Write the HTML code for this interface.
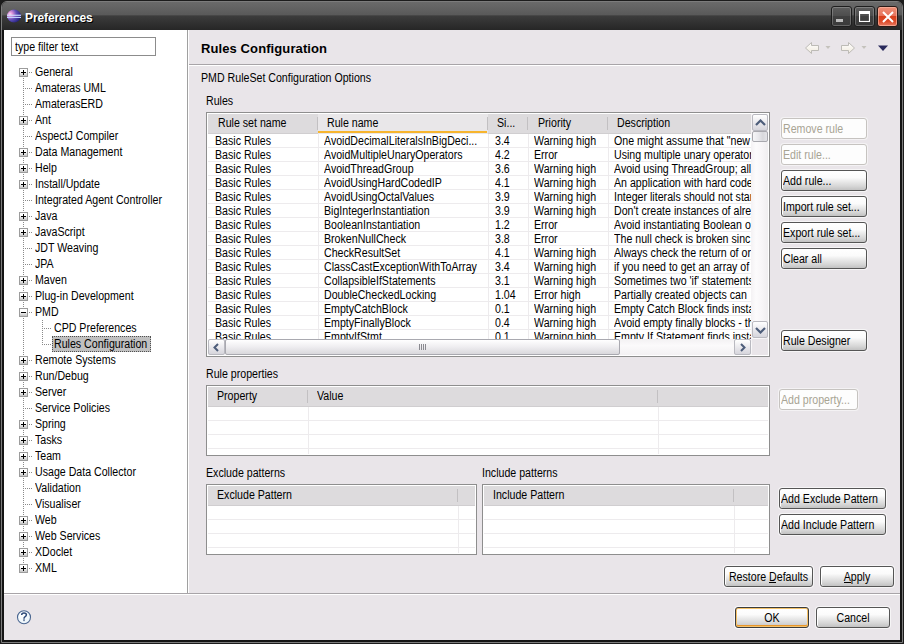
<!DOCTYPE html><html><head><meta charset="utf-8"><style>
*{margin:0;padding:0;box-sizing:border-box}
html,body{width:904px;height:644px;overflow:hidden;background:#1c1c1c;font-family:'Liberation Sans', sans-serif}
.t{position:absolute;white-space:nowrap;font-size:12px;line-height:14px;letter-spacing:0;color:#000;transform:scaleX(0.885);transform-origin:0 0}
.dis{color:#A8A494}
.btn{position:absolute;border:1px solid #555;border-radius:3px;background:linear-gradient(#ffffff 0%,#fbfbfb 35%,#eeeeee 50%,#d6d6d6 80%,#c2c2c2 100%);box-shadow:inset 1px 0 0 #fff,0 0 0 1px rgba(255,255,255,0.6)}
.dbtn{position:absolute;border:1px solid #C6C3C0;border-radius:3px;background:#fdfdfd;box-shadow:0 0 0 1px rgba(255,255,255,0.5)}
.hdr{position:absolute;background:#DDDBDD;}
.ok{border-color:#3c3c3c;box-shadow:inset 0 0 0 1px #F5C26A,inset 0 -1px 0 1px #E8962A,0 0 0 1px rgba(255,255,255,0.7)}
</style></head><body><div style="position:absolute;left:0px;top:0px;width:904px;height:644px;background:#1c1c1c"></div>
<div style="position:absolute;left:1px;top:1px;width:902px;height:642px;border:1px solid #7c7c7c;border-radius:6px 6px 0 0;background:#141414"></div>
<div style="position:absolute;left:2px;top:2px;width:900px;height:28px;border-radius:5px 5px 0 0;background:linear-gradient(#6a6a6a 0%,#5a5a5a 45%,#3c3c3c 50%,#262626 100%)"></div>
<div style="position:absolute;left:4px;top:30px;width:896px;height:610px;background:#E9E5E9"></div>
<svg style="position:absolute;left:6px;top:9px" width="16" height="15" viewBox="0 0 16 15">
<defs><radialGradient id="eg" cx="0.22" cy="0.35" r="0.9"><stop offset="0" stop-color="#ffd8f4"/><stop offset="0.2" stop-color="#d890d8"/><stop offset="0.5" stop-color="#6050b8"/><stop offset="1" stop-color="#101068"/></radialGradient></defs>
<ellipse cx="8" cy="7" rx="7" ry="6.5" fill="url(#eg)"/>
<rect x="1" y="5.7" width="14" height="1.1" fill="#d0e0ff"/>
<rect x="1" y="7.9" width="14" height="1.1" fill="#c0d0ff"/>
</svg>
<div style="position:absolute;left:25px;top:11px;font:bold 12px/14px 'Liberation Sans', sans-serif;letter-spacing:-0.1px;color:#fff;text-shadow:1px 1px 0 #000">Preferences</div>
<div style="position:absolute;left:831px;top:6px;width:21px;height:21px;border-radius:3px;border:1px solid #1e1e1e;box-shadow:inset 0 0 0 1px rgba(255,255,255,0.22);background:linear-gradient(#5e5e5e,#4e4e4e 45%,#404040 50%,#3a3a3a 100%)"><div style="position:absolute;left:4px;top:12px;width:7px;height:3px;background:#bdbdbd"></div></div>
<div style="position:absolute;left:854px;top:6px;width:21px;height:21px;border-radius:3px;border:1px solid #1e1e1e;box-shadow:inset 0 0 0 1px rgba(255,255,255,0.22);background:linear-gradient(#5e5e5e,#4e4e4e 45%,#404040 50%,#3a3a3a 100%)"><svg style="position:absolute;left:4px;top:4px" width="11" height="11" viewBox="0 0 11 11"><rect x="0.5" y="0.5" width="10" height="10" fill="none" stroke="#fff" stroke-width="1.2"/><rect x="0" y="0" width="11" height="3" fill="#fff"/></svg></div>
<div style="position:absolute;left:877px;top:6px;width:21px;height:21px;border-radius:3px;border:1px solid #2a1a16;box-shadow:inset 0 0 0 1px rgba(255,190,170,0.6);background:linear-gradient(#ee9078,#e8745c 45%,#d8401c 50%,#dc4a28 75%,#e87a62 100%)"><svg style="position:absolute;left:4px;top:4px" width="12" height="12" viewBox="0 0 12 12"><path d="M1 1 L11 11 M11 1 L1 11" stroke="#fff" stroke-width="2"/></svg></div>
<div style="position:absolute;left:4px;top:30px;width:183px;height:563px;background:#fff"></div>
<div style="position:absolute;left:187px;top:30px;width:1px;height:563px;background:#A0A0A0"></div>
<div style="position:absolute;left:188px;top:30px;width:1px;height:563px;background:#fff"></div>
<div style="position:absolute;left:11px;top:37px;width:145px;height:19px;border:1px solid #8c8c8c;background:#fff"></div>
<div class="t" style="left:15px;top:40px;">type filter text</div>
<div style="position:absolute;left:23px;top:78px;width:1px;height:495px;background-image:linear-gradient(#8a8a8a 50%,transparent 50%);background-size:1px 2px"></div>
<div style="position:absolute;left:25px;top:72px;width:7px;height:1px;background-image:linear-gradient(90deg,#8a8a8a 50%,transparent 50%);background-size:2px 1px"></div>
<div style="position:absolute;left:19px;top:68px;width:9px;height:9px;border:1px solid #9c9c9c;background:linear-gradient(#fff 35%,#c4c4c4)"><div style="position:absolute;left:1px;top:3px;width:5px;height:1px;background:#000"></div><div style="position:absolute;left:3px;top:1px;width:1px;height:5px;background:#000"></div></div>
<div class="t" style="left:35px;top:65px;">General</div>
<div style="position:absolute;left:25px;top:88px;width:7px;height:1px;background-image:linear-gradient(90deg,#8a8a8a 50%,transparent 50%);background-size:2px 1px"></div>
<div class="t" style="left:35px;top:81px;">Amateras UML</div>
<div style="position:absolute;left:25px;top:104px;width:7px;height:1px;background-image:linear-gradient(90deg,#8a8a8a 50%,transparent 50%);background-size:2px 1px"></div>
<div class="t" style="left:35px;top:97px;">AmaterasERD</div>
<div style="position:absolute;left:25px;top:120px;width:7px;height:1px;background-image:linear-gradient(90deg,#8a8a8a 50%,transparent 50%);background-size:2px 1px"></div>
<div style="position:absolute;left:19px;top:116px;width:9px;height:9px;border:1px solid #9c9c9c;background:linear-gradient(#fff 35%,#c4c4c4)"><div style="position:absolute;left:1px;top:3px;width:5px;height:1px;background:#000"></div><div style="position:absolute;left:3px;top:1px;width:1px;height:5px;background:#000"></div></div>
<div class="t" style="left:35px;top:113px;">Ant</div>
<div style="position:absolute;left:25px;top:136px;width:7px;height:1px;background-image:linear-gradient(90deg,#8a8a8a 50%,transparent 50%);background-size:2px 1px"></div>
<div class="t" style="left:35px;top:129px;">AspectJ Compiler</div>
<div style="position:absolute;left:25px;top:152px;width:7px;height:1px;background-image:linear-gradient(90deg,#8a8a8a 50%,transparent 50%);background-size:2px 1px"></div>
<div style="position:absolute;left:19px;top:148px;width:9px;height:9px;border:1px solid #9c9c9c;background:linear-gradient(#fff 35%,#c4c4c4)"><div style="position:absolute;left:1px;top:3px;width:5px;height:1px;background:#000"></div><div style="position:absolute;left:3px;top:1px;width:1px;height:5px;background:#000"></div></div>
<div class="t" style="left:35px;top:145px;">Data Management</div>
<div style="position:absolute;left:25px;top:168px;width:7px;height:1px;background-image:linear-gradient(90deg,#8a8a8a 50%,transparent 50%);background-size:2px 1px"></div>
<div style="position:absolute;left:19px;top:164px;width:9px;height:9px;border:1px solid #9c9c9c;background:linear-gradient(#fff 35%,#c4c4c4)"><div style="position:absolute;left:1px;top:3px;width:5px;height:1px;background:#000"></div><div style="position:absolute;left:3px;top:1px;width:1px;height:5px;background:#000"></div></div>
<div class="t" style="left:35px;top:161px;">Help</div>
<div style="position:absolute;left:25px;top:184px;width:7px;height:1px;background-image:linear-gradient(90deg,#8a8a8a 50%,transparent 50%);background-size:2px 1px"></div>
<div style="position:absolute;left:19px;top:180px;width:9px;height:9px;border:1px solid #9c9c9c;background:linear-gradient(#fff 35%,#c4c4c4)"><div style="position:absolute;left:1px;top:3px;width:5px;height:1px;background:#000"></div><div style="position:absolute;left:3px;top:1px;width:1px;height:5px;background:#000"></div></div>
<div class="t" style="left:35px;top:177px;">Install/Update</div>
<div style="position:absolute;left:25px;top:200px;width:7px;height:1px;background-image:linear-gradient(90deg,#8a8a8a 50%,transparent 50%);background-size:2px 1px"></div>
<div class="t" style="left:35px;top:193px;">Integrated Agent Controller</div>
<div style="position:absolute;left:25px;top:216px;width:7px;height:1px;background-image:linear-gradient(90deg,#8a8a8a 50%,transparent 50%);background-size:2px 1px"></div>
<div style="position:absolute;left:19px;top:212px;width:9px;height:9px;border:1px solid #9c9c9c;background:linear-gradient(#fff 35%,#c4c4c4)"><div style="position:absolute;left:1px;top:3px;width:5px;height:1px;background:#000"></div><div style="position:absolute;left:3px;top:1px;width:1px;height:5px;background:#000"></div></div>
<div class="t" style="left:35px;top:209px;">Java</div>
<div style="position:absolute;left:25px;top:232px;width:7px;height:1px;background-image:linear-gradient(90deg,#8a8a8a 50%,transparent 50%);background-size:2px 1px"></div>
<div style="position:absolute;left:19px;top:228px;width:9px;height:9px;border:1px solid #9c9c9c;background:linear-gradient(#fff 35%,#c4c4c4)"><div style="position:absolute;left:1px;top:3px;width:5px;height:1px;background:#000"></div><div style="position:absolute;left:3px;top:1px;width:1px;height:5px;background:#000"></div></div>
<div class="t" style="left:35px;top:225px;">JavaScript</div>
<div style="position:absolute;left:25px;top:248px;width:7px;height:1px;background-image:linear-gradient(90deg,#8a8a8a 50%,transparent 50%);background-size:2px 1px"></div>
<div class="t" style="left:35px;top:241px;">JDT Weaving</div>
<div style="position:absolute;left:25px;top:264px;width:7px;height:1px;background-image:linear-gradient(90deg,#8a8a8a 50%,transparent 50%);background-size:2px 1px"></div>
<div class="t" style="left:35px;top:257px;">JPA</div>
<div style="position:absolute;left:25px;top:280px;width:7px;height:1px;background-image:linear-gradient(90deg,#8a8a8a 50%,transparent 50%);background-size:2px 1px"></div>
<div style="position:absolute;left:19px;top:276px;width:9px;height:9px;border:1px solid #9c9c9c;background:linear-gradient(#fff 35%,#c4c4c4)"><div style="position:absolute;left:1px;top:3px;width:5px;height:1px;background:#000"></div><div style="position:absolute;left:3px;top:1px;width:1px;height:5px;background:#000"></div></div>
<div class="t" style="left:35px;top:273px;">Maven</div>
<div style="position:absolute;left:25px;top:296px;width:7px;height:1px;background-image:linear-gradient(90deg,#8a8a8a 50%,transparent 50%);background-size:2px 1px"></div>
<div style="position:absolute;left:19px;top:292px;width:9px;height:9px;border:1px solid #9c9c9c;background:linear-gradient(#fff 35%,#c4c4c4)"><div style="position:absolute;left:1px;top:3px;width:5px;height:1px;background:#000"></div><div style="position:absolute;left:3px;top:1px;width:1px;height:5px;background:#000"></div></div>
<div class="t" style="left:35px;top:289px;">Plug-in Development</div>
<div style="position:absolute;left:25px;top:312px;width:7px;height:1px;background-image:linear-gradient(90deg,#8a8a8a 50%,transparent 50%);background-size:2px 1px"></div>
<div style="position:absolute;left:19px;top:308px;width:9px;height:9px;border:1px solid #9c9c9c;background:linear-gradient(#fff 35%,#c4c4c4)"><div style="position:absolute;left:1px;top:3px;width:5px;height:1px;background:#000"></div></div>
<div class="t" style="left:35px;top:305px;">PMD</div>
<div style="position:absolute;left:44px;top:328px;width:7px;height:1px;background-image:linear-gradient(90deg,#8a8a8a 50%,transparent 50%);background-size:2px 1px"></div>
<div class="t" style="left:54px;top:321px;">CPD Preferences</div>
<div style="position:absolute;left:44px;top:344px;width:7px;height:1px;background-image:linear-gradient(90deg,#8a8a8a 50%,transparent 50%);background-size:2px 1px"></div>
<div style="position:absolute;left:52px;top:336px;width:99px;height:16px;background:#C0C0C0;border:1px dotted #505050"></div>
<div class="t" style="left:54px;top:337px;">Rules Configuration</div>
<div style="position:absolute;left:25px;top:360px;width:7px;height:1px;background-image:linear-gradient(90deg,#8a8a8a 50%,transparent 50%);background-size:2px 1px"></div>
<div style="position:absolute;left:19px;top:356px;width:9px;height:9px;border:1px solid #9c9c9c;background:linear-gradient(#fff 35%,#c4c4c4)"><div style="position:absolute;left:1px;top:3px;width:5px;height:1px;background:#000"></div><div style="position:absolute;left:3px;top:1px;width:1px;height:5px;background:#000"></div></div>
<div class="t" style="left:35px;top:353px;">Remote Systems</div>
<div style="position:absolute;left:25px;top:376px;width:7px;height:1px;background-image:linear-gradient(90deg,#8a8a8a 50%,transparent 50%);background-size:2px 1px"></div>
<div style="position:absolute;left:19px;top:372px;width:9px;height:9px;border:1px solid #9c9c9c;background:linear-gradient(#fff 35%,#c4c4c4)"><div style="position:absolute;left:1px;top:3px;width:5px;height:1px;background:#000"></div><div style="position:absolute;left:3px;top:1px;width:1px;height:5px;background:#000"></div></div>
<div class="t" style="left:35px;top:369px;">Run/Debug</div>
<div style="position:absolute;left:25px;top:392px;width:7px;height:1px;background-image:linear-gradient(90deg,#8a8a8a 50%,transparent 50%);background-size:2px 1px"></div>
<div style="position:absolute;left:19px;top:388px;width:9px;height:9px;border:1px solid #9c9c9c;background:linear-gradient(#fff 35%,#c4c4c4)"><div style="position:absolute;left:1px;top:3px;width:5px;height:1px;background:#000"></div><div style="position:absolute;left:3px;top:1px;width:1px;height:5px;background:#000"></div></div>
<div class="t" style="left:35px;top:385px;">Server</div>
<div style="position:absolute;left:25px;top:408px;width:7px;height:1px;background-image:linear-gradient(90deg,#8a8a8a 50%,transparent 50%);background-size:2px 1px"></div>
<div class="t" style="left:35px;top:401px;">Service Policies</div>
<div style="position:absolute;left:25px;top:424px;width:7px;height:1px;background-image:linear-gradient(90deg,#8a8a8a 50%,transparent 50%);background-size:2px 1px"></div>
<div style="position:absolute;left:19px;top:420px;width:9px;height:9px;border:1px solid #9c9c9c;background:linear-gradient(#fff 35%,#c4c4c4)"><div style="position:absolute;left:1px;top:3px;width:5px;height:1px;background:#000"></div><div style="position:absolute;left:3px;top:1px;width:1px;height:5px;background:#000"></div></div>
<div class="t" style="left:35px;top:417px;">Spring</div>
<div style="position:absolute;left:25px;top:440px;width:7px;height:1px;background-image:linear-gradient(90deg,#8a8a8a 50%,transparent 50%);background-size:2px 1px"></div>
<div style="position:absolute;left:19px;top:436px;width:9px;height:9px;border:1px solid #9c9c9c;background:linear-gradient(#fff 35%,#c4c4c4)"><div style="position:absolute;left:1px;top:3px;width:5px;height:1px;background:#000"></div><div style="position:absolute;left:3px;top:1px;width:1px;height:5px;background:#000"></div></div>
<div class="t" style="left:35px;top:433px;">Tasks</div>
<div style="position:absolute;left:25px;top:456px;width:7px;height:1px;background-image:linear-gradient(90deg,#8a8a8a 50%,transparent 50%);background-size:2px 1px"></div>
<div style="position:absolute;left:19px;top:452px;width:9px;height:9px;border:1px solid #9c9c9c;background:linear-gradient(#fff 35%,#c4c4c4)"><div style="position:absolute;left:1px;top:3px;width:5px;height:1px;background:#000"></div><div style="position:absolute;left:3px;top:1px;width:1px;height:5px;background:#000"></div></div>
<div class="t" style="left:35px;top:449px;">Team</div>
<div style="position:absolute;left:25px;top:472px;width:7px;height:1px;background-image:linear-gradient(90deg,#8a8a8a 50%,transparent 50%);background-size:2px 1px"></div>
<div style="position:absolute;left:19px;top:468px;width:9px;height:9px;border:1px solid #9c9c9c;background:linear-gradient(#fff 35%,#c4c4c4)"><div style="position:absolute;left:1px;top:3px;width:5px;height:1px;background:#000"></div><div style="position:absolute;left:3px;top:1px;width:1px;height:5px;background:#000"></div></div>
<div class="t" style="left:35px;top:465px;">Usage Data Collector</div>
<div style="position:absolute;left:25px;top:488px;width:7px;height:1px;background-image:linear-gradient(90deg,#8a8a8a 50%,transparent 50%);background-size:2px 1px"></div>
<div class="t" style="left:35px;top:481px;">Validation</div>
<div style="position:absolute;left:25px;top:504px;width:7px;height:1px;background-image:linear-gradient(90deg,#8a8a8a 50%,transparent 50%);background-size:2px 1px"></div>
<div class="t" style="left:35px;top:497px;">Visualiser</div>
<div style="position:absolute;left:25px;top:520px;width:7px;height:1px;background-image:linear-gradient(90deg,#8a8a8a 50%,transparent 50%);background-size:2px 1px"></div>
<div style="position:absolute;left:19px;top:516px;width:9px;height:9px;border:1px solid #9c9c9c;background:linear-gradient(#fff 35%,#c4c4c4)"><div style="position:absolute;left:1px;top:3px;width:5px;height:1px;background:#000"></div><div style="position:absolute;left:3px;top:1px;width:1px;height:5px;background:#000"></div></div>
<div class="t" style="left:35px;top:513px;">Web</div>
<div style="position:absolute;left:25px;top:536px;width:7px;height:1px;background-image:linear-gradient(90deg,#8a8a8a 50%,transparent 50%);background-size:2px 1px"></div>
<div style="position:absolute;left:19px;top:532px;width:9px;height:9px;border:1px solid #9c9c9c;background:linear-gradient(#fff 35%,#c4c4c4)"><div style="position:absolute;left:1px;top:3px;width:5px;height:1px;background:#000"></div><div style="position:absolute;left:3px;top:1px;width:1px;height:5px;background:#000"></div></div>
<div class="t" style="left:35px;top:529px;">Web Services</div>
<div style="position:absolute;left:25px;top:552px;width:7px;height:1px;background-image:linear-gradient(90deg,#8a8a8a 50%,transparent 50%);background-size:2px 1px"></div>
<div style="position:absolute;left:19px;top:548px;width:9px;height:9px;border:1px solid #9c9c9c;background:linear-gradient(#fff 35%,#c4c4c4)"><div style="position:absolute;left:1px;top:3px;width:5px;height:1px;background:#000"></div><div style="position:absolute;left:3px;top:1px;width:1px;height:5px;background:#000"></div></div>
<div class="t" style="left:35px;top:545px;">XDoclet</div>
<div style="position:absolute;left:25px;top:568px;width:7px;height:1px;background-image:linear-gradient(90deg,#8a8a8a 50%,transparent 50%);background-size:2px 1px"></div>
<div style="position:absolute;left:19px;top:564px;width:9px;height:9px;border:1px solid #9c9c9c;background:linear-gradient(#fff 35%,#c4c4c4)"><div style="position:absolute;left:1px;top:3px;width:5px;height:1px;background:#000"></div><div style="position:absolute;left:3px;top:1px;width:1px;height:5px;background:#000"></div></div>
<div class="t" style="left:35px;top:561px;">XML</div>
<div style="position:absolute;left:42px;top:320px;width:1px;height:25px;background-image:linear-gradient(#8a8a8a 50%,transparent 50%);background-size:1px 2px"></div>
<div class="t" style="left:201px;top:42px;font-size:13px;font-weight:bold;letter-spacing:0.1px;transform:none">Rules Configuration</div>
<div style="position:absolute;left:189px;top:64px;width:711px;height:1px;background:#A8A4A8"></div>
<div style="position:absolute;left:189px;top:65px;width:711px;height:1px;background:#fff"></div>
<div style="position:absolute;left:4px;top:593px;width:896px;height:1px;background:#A8A4A8"></div>
<div style="position:absolute;left:4px;top:594px;width:896px;height:1px;background:#fff"></div>
<svg style="position:absolute;left:804px;top:42px" width="86" height="15" viewBox="0 0 86 15">
<defs><linearGradient id="ag" x1="0" y1="0" x2="0" y2="1"><stop offset="0" stop-color="#ffffff"/><stop offset="1" stop-color="#efe9dc"/></linearGradient></defs>
<path d="M1.5 6 L7.5 0.5 L7.5 3.5 L14.5 3.5 L14.5 8.5 L7.5 8.5 L7.5 11.5 Z" fill="url(#ag)" stroke="#BDBBB6" stroke-width="1"/>
<path d="M21.5 4 L26.5 4 L24 7 Z" fill="#c4c2bc"/>
<path d="M50.5 6 L44.5 0.5 L44.5 3.5 L37.5 3.5 L37.5 8.5 L44.5 8.5 L44.5 11.5 Z" fill="url(#ag)" stroke="#BDBBB6" stroke-width="1"/>
<path d="M57.5 4 L62.5 4 L60 7 Z" fill="#c4c2bc"/>
<path d="M74 3.5 L84 3.5 L79 9 Z" fill="#2a2a5c"/>
</svg>
<div class="t" style="left:201px;top:71px;">PMD RuleSet Configuration Options</div>
<div class="t" style="left:206px;top:94px;">Rules</div>
<div style="position:absolute;left:206px;top:112px;width:564px;height:245px;border:1px solid #8E8E8E;background:#fff"></div>
<div style="position:absolute;left:207px;top:113px;width:562px;height:243px;border:1px solid #fff;background:#fff"></div>
<div style="position:absolute;left:208px;top:114px;width:543px;height:20px;background:#DDDBDD"></div>
<div style="position:absolute;left:318px;top:114px;width:170px;height:20px;background:#E9E7E9"></div>
<div style="position:absolute;left:318px;top:131px;width:169px;height:2px;background:#F7B52E"></div>
<div style="position:absolute;left:208px;top:133px;width:110px;height:1px;background:#D0CED0"></div>
<div style="position:absolute;left:488px;top:133px;width:263px;height:1px;background:#D0CED0"></div>
<div style="position:absolute;left:317px;top:117px;width:1px;height:13px;background:#C2C0C2"></div>
<div style="position:absolute;left:487px;top:117px;width:1px;height:13px;background:#C2C0C2"></div>
<div style="position:absolute;left:527px;top:117px;width:1px;height:13px;background:#C2C0C2"></div>
<div style="position:absolute;left:607px;top:117px;width:1px;height:13px;background:#C2C0C2"></div>
<div class="t" style="left:218px;top:116px;">Rule set name</div>
<div class="t" style="left:327px;top:116px;">Rule name</div>
<div class="t" style="left:497px;top:116px;">Si...</div>
<div class="t" style="left:538px;top:116px;">Priority</div>
<div class="t" style="left:617px;top:116px;">Description</div>
<div style="position:absolute;left:208px;top:134px;width:543px;height:205px;overflow:hidden">
<div style="position:absolute;left:0;top:13px;width:544px;height:1px;background:#EDEBED"></div>
<div style="position:absolute;left:0;top:27px;width:544px;height:1px;background:#EDEBED"></div>
<div style="position:absolute;left:0;top:41px;width:544px;height:1px;background:#EDEBED"></div>
<div style="position:absolute;left:0;top:55px;width:544px;height:1px;background:#EDEBED"></div>
<div style="position:absolute;left:0;top:69px;width:544px;height:1px;background:#EDEBED"></div>
<div style="position:absolute;left:0;top:83px;width:544px;height:1px;background:#EDEBED"></div>
<div style="position:absolute;left:0;top:97px;width:544px;height:1px;background:#EDEBED"></div>
<div style="position:absolute;left:0;top:111px;width:544px;height:1px;background:#EDEBED"></div>
<div style="position:absolute;left:0;top:125px;width:544px;height:1px;background:#EDEBED"></div>
<div style="position:absolute;left:0;top:139px;width:544px;height:1px;background:#EDEBED"></div>
<div style="position:absolute;left:0;top:153px;width:544px;height:1px;background:#EDEBED"></div>
<div style="position:absolute;left:0;top:167px;width:544px;height:1px;background:#EDEBED"></div>
<div style="position:absolute;left:0;top:181px;width:544px;height:1px;background:#EDEBED"></div>
<div style="position:absolute;left:0;top:195px;width:544px;height:1px;background:#EDEBED"></div>
<div style="position:absolute;left:0;top:209px;width:544px;height:1px;background:#EDEBED"></div>
<div style="position:absolute;left:110px;top:0;width:1px;height:205px;background:#EDEBED"></div>
<div style="position:absolute;left:280px;top:0;width:1px;height:205px;background:#EDEBED"></div>
<div style="position:absolute;left:320px;top:0;width:1px;height:205px;background:#EDEBED"></div>
<div style="position:absolute;left:400px;top:0;width:1px;height:205px;background:#EDEBED"></div>
<div class="t" style="left:7px;top:0px;width:112.99px;overflow:hidden">Basic Rules</div>
<div class="t" style="left:116px;top:0px;width:183.05px;overflow:hidden">AvoidDecimalLiteralsInBigDeci...</div>
<div class="t" style="left:287px;top:0px;width:36.16px;overflow:hidden">3.4</div>
<div class="t" style="left:326px;top:0px;width:81.36px;overflow:hidden">Warning high</div>
<div class="t" style="left:406px;top:0px;width:154.80px;overflow:hidden">One might assume that "new</div>
<div class="t" style="left:7px;top:14px;width:112.99px;overflow:hidden">Basic Rules</div>
<div class="t" style="left:116px;top:14px;width:183.05px;overflow:hidden">AvoidMultipleUnaryOperators</div>
<div class="t" style="left:287px;top:14px;width:36.16px;overflow:hidden">4.2</div>
<div class="t" style="left:326px;top:14px;width:81.36px;overflow:hidden">Error</div>
<div class="t" style="left:406px;top:14px;width:154.80px;overflow:hidden">Using multiple unary operator</div>
<div class="t" style="left:7px;top:28px;width:112.99px;overflow:hidden">Basic Rules</div>
<div class="t" style="left:116px;top:28px;width:183.05px;overflow:hidden">AvoidThreadGroup</div>
<div class="t" style="left:287px;top:28px;width:36.16px;overflow:hidden">3.6</div>
<div class="t" style="left:326px;top:28px;width:81.36px;overflow:hidden">Warning high</div>
<div class="t" style="left:406px;top:28px;width:154.80px;overflow:hidden">Avoid using ThreadGroup; all</div>
<div class="t" style="left:7px;top:42px;width:112.99px;overflow:hidden">Basic Rules</div>
<div class="t" style="left:116px;top:42px;width:183.05px;overflow:hidden">AvoidUsingHardCodedIP</div>
<div class="t" style="left:287px;top:42px;width:36.16px;overflow:hidden">4.1</div>
<div class="t" style="left:326px;top:42px;width:81.36px;overflow:hidden">Warning high</div>
<div class="t" style="left:406px;top:42px;width:154.80px;overflow:hidden">An application with hard code</div>
<div class="t" style="left:7px;top:56px;width:112.99px;overflow:hidden">Basic Rules</div>
<div class="t" style="left:116px;top:56px;width:183.05px;overflow:hidden">AvoidUsingOctalValues</div>
<div class="t" style="left:287px;top:56px;width:36.16px;overflow:hidden">3.9</div>
<div class="t" style="left:326px;top:56px;width:81.36px;overflow:hidden">Warning high</div>
<div class="t" style="left:406px;top:56px;width:154.80px;overflow:hidden">Integer literals should not star</div>
<div class="t" style="left:7px;top:70px;width:112.99px;overflow:hidden">Basic Rules</div>
<div class="t" style="left:116px;top:70px;width:183.05px;overflow:hidden">BigIntegerInstantiation</div>
<div class="t" style="left:287px;top:70px;width:36.16px;overflow:hidden">3.9</div>
<div class="t" style="left:326px;top:70px;width:81.36px;overflow:hidden">Warning high</div>
<div class="t" style="left:406px;top:70px;width:154.80px;overflow:hidden">Don't create instances of alre</div>
<div class="t" style="left:7px;top:84px;width:112.99px;overflow:hidden">Basic Rules</div>
<div class="t" style="left:116px;top:84px;width:183.05px;overflow:hidden">BooleanInstantiation</div>
<div class="t" style="left:287px;top:84px;width:36.16px;overflow:hidden">1.2</div>
<div class="t" style="left:326px;top:84px;width:81.36px;overflow:hidden">Error</div>
<div class="t" style="left:406px;top:84px;width:154.80px;overflow:hidden">Avoid instantiating Boolean o</div>
<div class="t" style="left:7px;top:98px;width:112.99px;overflow:hidden">Basic Rules</div>
<div class="t" style="left:116px;top:98px;width:183.05px;overflow:hidden">BrokenNullCheck</div>
<div class="t" style="left:287px;top:98px;width:36.16px;overflow:hidden">3.8</div>
<div class="t" style="left:326px;top:98px;width:81.36px;overflow:hidden">Error</div>
<div class="t" style="left:406px;top:98px;width:154.80px;overflow:hidden">The null check is broken sinc</div>
<div class="t" style="left:7px;top:112px;width:112.99px;overflow:hidden">Basic Rules</div>
<div class="t" style="left:116px;top:112px;width:183.05px;overflow:hidden">CheckResultSet</div>
<div class="t" style="left:287px;top:112px;width:36.16px;overflow:hidden">4.1</div>
<div class="t" style="left:326px;top:112px;width:81.36px;overflow:hidden">Warning high</div>
<div class="t" style="left:406px;top:112px;width:154.80px;overflow:hidden">Always check the return of or</div>
<div class="t" style="left:7px;top:126px;width:112.99px;overflow:hidden">Basic Rules</div>
<div class="t" style="left:116px;top:126px;width:183.05px;overflow:hidden">ClassCastExceptionWithToArray</div>
<div class="t" style="left:287px;top:126px;width:36.16px;overflow:hidden">3.4</div>
<div class="t" style="left:326px;top:126px;width:81.36px;overflow:hidden">Warning high</div>
<div class="t" style="left:406px;top:126px;width:154.80px;overflow:hidden">if you need to get an array of</div>
<div class="t" style="left:7px;top:140px;width:112.99px;overflow:hidden">Basic Rules</div>
<div class="t" style="left:116px;top:140px;width:183.05px;overflow:hidden">CollapsibleIfStatements</div>
<div class="t" style="left:287px;top:140px;width:36.16px;overflow:hidden">3.1</div>
<div class="t" style="left:326px;top:140px;width:81.36px;overflow:hidden">Warning high</div>
<div class="t" style="left:406px;top:140px;width:154.80px;overflow:hidden">Sometimes two 'if' statements</div>
<div class="t" style="left:7px;top:154px;width:112.99px;overflow:hidden">Basic Rules</div>
<div class="t" style="left:116px;top:154px;width:183.05px;overflow:hidden">DoubleCheckedLocking</div>
<div class="t" style="left:287px;top:154px;width:36.16px;overflow:hidden">1.04</div>
<div class="t" style="left:326px;top:154px;width:81.36px;overflow:hidden">Error high</div>
<div class="t" style="left:406px;top:154px;width:154.80px;overflow:hidden">Partially created objects can</div>
<div class="t" style="left:7px;top:168px;width:112.99px;overflow:hidden">Basic Rules</div>
<div class="t" style="left:116px;top:168px;width:183.05px;overflow:hidden">EmptyCatchBlock</div>
<div class="t" style="left:287px;top:168px;width:36.16px;overflow:hidden">0.1</div>
<div class="t" style="left:326px;top:168px;width:81.36px;overflow:hidden">Warning high</div>
<div class="t" style="left:406px;top:168px;width:154.80px;overflow:hidden">Empty Catch Block finds insta</div>
<div class="t" style="left:7px;top:182px;width:112.99px;overflow:hidden">Basic Rules</div>
<div class="t" style="left:116px;top:182px;width:183.05px;overflow:hidden">EmptyFinallyBlock</div>
<div class="t" style="left:287px;top:182px;width:36.16px;overflow:hidden">0.4</div>
<div class="t" style="left:326px;top:182px;width:81.36px;overflow:hidden">Warning high</div>
<div class="t" style="left:406px;top:182px;width:154.80px;overflow:hidden">Avoid empty finally blocks - th</div>
<div class="t" style="left:7px;top:196px;width:112.99px;overflow:hidden">Basic Rules</div>
<div class="t" style="left:116px;top:196px;width:183.05px;overflow:hidden">EmptyIfStmt</div>
<div class="t" style="left:287px;top:196px;width:36.16px;overflow:hidden">0.1</div>
<div class="t" style="left:326px;top:196px;width:81.36px;overflow:hidden">Warning high</div>
<div class="t" style="left:406px;top:196px;width:154.80px;overflow:hidden">Empty If Statement finds insta</div>
</div>
<div style="position:absolute;left:751px;top:114px;width:17px;height:225px;background:linear-gradient(90deg,#F4F2F4,#FCFBFC 30%,#F8F6F8 60%,#F0EEF0)"></div>
<div style="position:absolute;left:752px;top:114px;width:16px;height:17px;border:1px solid #B9B9C0;border-radius:2px;background:linear-gradient(#FFFFFF,#E6E5EA 60%,#D6D5DC)"><svg style="position:absolute;left:2px;top:4px" width="11" height="7" viewBox="0 0 11 7"><path d="M1 6 L5.5 1.5 L10 6" fill="none" stroke="#4D5D7A" stroke-width="2.2"/></svg></div>
<div style="position:absolute;left:752px;top:131px;width:16px;height:11px;border:1px solid #A8A8AE;border-radius:2px;background:linear-gradient(90deg,#F6F6F8,#E8E8EC 40%,#D8D8DC 70%,#E4E4E8)"></div>
<div style="position:absolute;left:752px;top:321px;width:16px;height:17px;border:1px solid #B9B9C0;border-radius:2px;background:linear-gradient(#FFFFFF,#E6E5EA 60%,#D6D5DC)"><svg style="position:absolute;left:2px;top:5px" width="11" height="7" viewBox="0 0 11 7"><path d="M1 1 L5.5 5.5 L10 1" fill="none" stroke="#4D5D7A" stroke-width="2.2"/></svg></div>
<div style="position:absolute;left:208px;top:339px;width:544px;height:16px;background:linear-gradient(#F3F1F3,#FBFAFB 40%,#F3F1F3)"></div>
<div style="position:absolute;left:208px;top:339px;width:17px;height:16px;border:1px solid #B9B9C0;border-radius:2px;background:linear-gradient(#FFFFFF,#E6E5EA 60%,#D6D5DC)"><svg style="position:absolute;left:4px;top:3px" width="6" height="9" viewBox="0 0 6 9"><path d="M5 1 L1.5 4.5 L5 8" fill="none" stroke="#4D5D7A" stroke-width="2"/></svg></div>
<div style="position:absolute;left:225px;top:339px;width:395px;height:16px;border:1px solid #A9A9B0;border-radius:2px;background:linear-gradient(#FFFFFF,#EEEDF0 50%,#D9D8DC)"><div style="position:absolute;left:193px;top:4px;width:1px;height:6px;background:#8a8a90"></div><div style="position:absolute;left:195px;top:4px;width:1px;height:6px;background:#8a8a90"></div><div style="position:absolute;left:197px;top:4px;width:1px;height:6px;background:#8a8a90"></div><div style="position:absolute;left:199px;top:4px;width:1px;height:6px;background:#8a8a90"></div></div>
<div style="position:absolute;left:734px;top:339px;width:17px;height:16px;border:1px solid #B9B9C0;border-radius:2px;background:linear-gradient(#FFFFFF,#E6E5EA 60%,#D6D5DC)"><svg style="position:absolute;left:5px;top:3px" width="6" height="9" viewBox="0 0 6 9"><path d="M1 1 L4.5 4.5 L1 8" fill="none" stroke="#4D5D7A" stroke-width="2"/></svg></div>
<div style="position:absolute;left:752px;top:339px;width:16px;height:16px;background:#E9E5E9"></div>
<div class="dbtn" style="left:781px;top:118px;width:86px;height:21px"></div>
<div class="t dis" style="left:783px;top:122px;">Remove rule</div>
<div class="dbtn" style="left:781px;top:144px;width:86px;height:21px"></div>
<div class="t dis" style="left:783px;top:148px;">Edit rule...</div>
<div class="btn" style="left:781px;top:170px;width:86px;height:21px"></div>
<div class="t" style="left:783px;top:174px;">Add rule...</div>
<div class="btn" style="left:781px;top:196px;width:86px;height:21px"></div>
<div class="t" style="left:783px;top:200px;">Import rule set...</div>
<div class="btn" style="left:781px;top:222px;width:86px;height:21px"></div>
<div class="t" style="left:783px;top:226px;">Export rule set...</div>
<div class="btn" style="left:781px;top:248px;width:86px;height:21px"></div>
<div class="t" style="left:783px;top:252px;">Clear all</div>
<div class="btn" style="left:781px;top:330px;width:86px;height:21px"></div>
<div class="t" style="left:783px;top:334px;">Rule Designer</div>
<div class="t" style="left:206px;top:367px;">Rule properties</div>
<div style="position:absolute;left:206px;top:385px;width:564px;height:71px;border:1px solid #8E8E8E;background:#fff"></div>
<div style="position:absolute;left:208px;top:387px;width:560px;height:20px;background:#DDDBDD"></div>
<div style="position:absolute;left:208px;top:406px;width:560px;height:1px;background:#D0CED0"></div>
<div style="position:absolute;left:307px;top:390px;width:1px;height:13px;background:#C2C0C2"></div>
<div style="position:absolute;left:657px;top:390px;width:1px;height:13px;background:#C2C0C2"></div>
<div class="t" style="left:217px;top:389px;">Property</div>
<div class="t" style="left:317px;top:389px;">Value</div>
<div style="position:absolute;left:208px;top:420px;width:560px;height:1px;background:#EDEBED"></div>
<div style="position:absolute;left:208px;top:434px;width:560px;height:1px;background:#EDEBED"></div>
<div style="position:absolute;left:208px;top:448px;width:560px;height:1px;background:#EDEBED"></div>
<div style="position:absolute;left:308px;top:407px;width:1px;height:47px;background:#EDEBED"></div>
<div style="position:absolute;left:658px;top:407px;width:1px;height:47px;background:#EDEBED"></div>
<div class="dbtn" style="left:779px;top:389px;width:79px;height:21px"></div>
<div class="t dis" style="left:781px;top:393px;">Add property...</div>
<div class="t" style="left:206px;top:466px;">Exclude patterns</div>
<div class="t" style="left:482px;top:466px;">Include patterns</div>
<div style="position:absolute;left:206px;top:484px;width:271px;height:71px;border:1px solid #8E8E8E;background:#fff"></div>
<div style="position:absolute;left:208px;top:486px;width:267px;height:20px;background:#DDDBDD"></div>
<div style="position:absolute;left:208px;top:505px;width:267px;height:1px;background:#D0CED0"></div>
<div style="position:absolute;left:457px;top:489px;width:1px;height:13px;background:#C2C0C2"></div>
<div class="t" style="left:217px;top:488px;">Exclude Pattern</div>
<div style="position:absolute;left:208px;top:519px;width:267px;height:1px;background:#EDEBED"></div>
<div style="position:absolute;left:208px;top:533px;width:267px;height:1px;background:#EDEBED"></div>
<div style="position:absolute;left:208px;top:547px;width:267px;height:1px;background:#EDEBED"></div>
<div style="position:absolute;left:458px;top:506px;width:1px;height:47px;background:#EDEBED"></div>
<div style="position:absolute;left:482px;top:484px;width:288px;height:71px;border:1px solid #8E8E8E;background:#fff"></div>
<div style="position:absolute;left:484px;top:486px;width:284px;height:20px;background:#DDDBDD"></div>
<div style="position:absolute;left:484px;top:505px;width:284px;height:1px;background:#D0CED0"></div>
<div style="position:absolute;left:733px;top:489px;width:1px;height:13px;background:#C2C0C2"></div>
<div class="t" style="left:493px;top:488px;">Include Pattern</div>
<div style="position:absolute;left:484px;top:519px;width:284px;height:1px;background:#EDEBED"></div>
<div style="position:absolute;left:484px;top:533px;width:284px;height:1px;background:#EDEBED"></div>
<div style="position:absolute;left:484px;top:547px;width:284px;height:1px;background:#EDEBED"></div>
<div style="position:absolute;left:734px;top:506px;width:1px;height:47px;background:#EDEBED"></div>
<div class="btn" style="left:779px;top:488px;width:107px;height:21px"></div>
<div class="t" style="left:781px;top:492px;">Add Exclude Pattern</div>
<div class="btn" style="left:779px;top:514px;width:107px;height:21px"></div>
<div class="t" style="left:781px;top:518px;">Add Include Pattern</div>
<div class="btn" style="left:724px;top:566px;width:89px;height:21px"></div>
<div class="t" style="left:724px;top:570px;width:100.56px;text-align:center">Restore Defaults</div>
<div class="btn" style="left:820px;top:566px;width:74px;height:21px"></div>
<div class="t" style="left:820px;top:570px;width:83.62px;text-align:center">Apply</div>
<div style="position:absolute;left:769px;top:582px;width:7px;height:1px;background:#000"></div>
<div style="position:absolute;left:844px;top:582px;width:7px;height:1px;background:#000"></div>
<div class="btn ok" style="left:735px;top:607px;width:74px;height:21px"></div>
<div class="t" style="left:735px;top:611px;width:83.62px;text-align:center">OK</div>
<div class="btn" style="left:816px;top:607px;width:74px;height:21px"></div>
<div class="t" style="left:816px;top:611px;width:83.62px;text-align:center">Cancel</div>
<svg style="position:absolute;left:16px;top:609px" width="17" height="17" viewBox="0 0 17 17">
<defs><radialGradient id="hg" cx="0.4" cy="0.35" r="0.7"><stop offset="0" stop-color="#ffffff"/><stop offset="1" stop-color="#eaf4fa"/></radialGradient></defs>
<circle cx="8" cy="8.2" r="6.5" fill="url(#hg)" stroke="#4A6690" stroke-width="1.1"/>
<path d="M5.7 6 Q5.7 3.9 8 3.9 Q10.4 3.9 10.4 5.8 Q10.4 7.1 8.9 7.9 Q8 8.4 8 9.8" fill="none" stroke="#2E4A78" stroke-width="1.5"/>
<path d="M6.8 10.6 L9.2 10.6 L8 12.6 Z" fill="#2E4A78"/>
</svg></body></html>
